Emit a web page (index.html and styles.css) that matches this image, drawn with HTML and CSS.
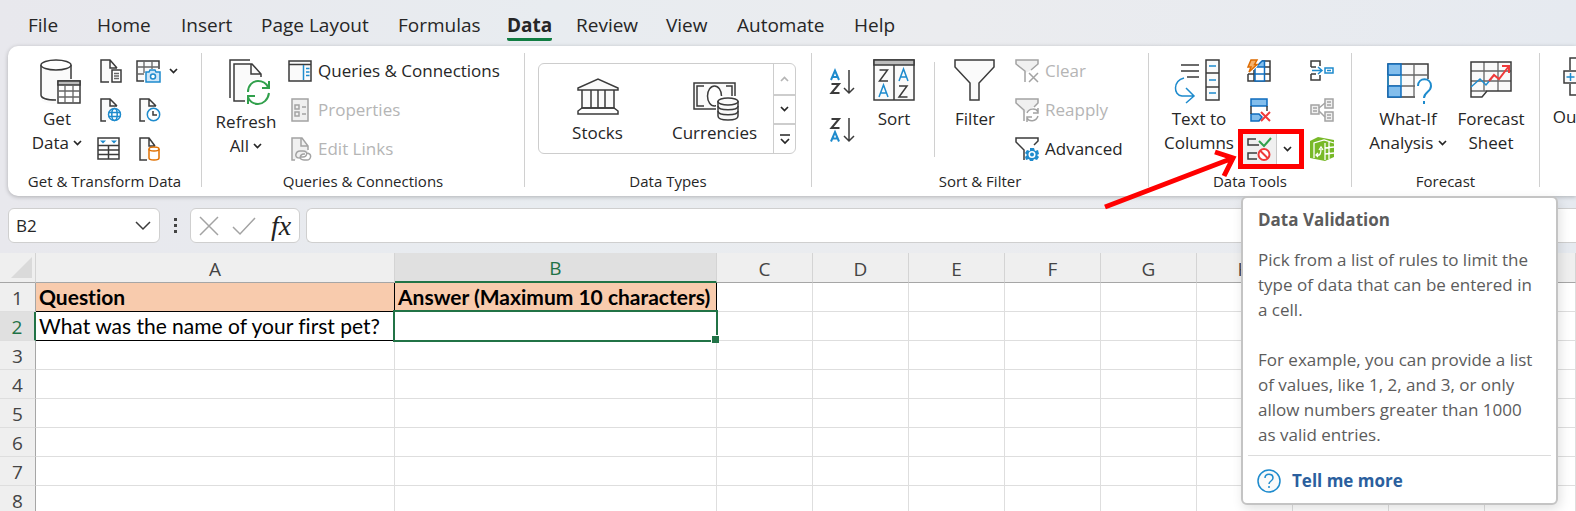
FILE: index.html
```html
<!DOCTYPE html>
<html lang="en">
<head>
<meta charset="utf-8">
<title>Spreadsheet</title>
<link rel="stylesheet" href="styles.css">
</head>
<body>
<nav class="tabs" aria-label="Ribbon tabs">
  <button class="tab">File</button>
  <button class="tab">Home</button>
  <button class="tab">Insert</button>
  <button class="tab">Page Layout</button>
  <button class="tab">Formulas</button>
  <button class="tab tab-active">Data</button>
  <button class="tab">Review</button>
  <button class="tab">View</button>
  <button class="tab">Automate</button>
  <button class="tab">Help</button>
</nav>

<div class="ribbon">
  <section class="group group-get">
    <div class="tools">
      <button class="big">
        <svg class="icon-lg" viewBox="0 0 48 48"><path class="f" d="M8 8v34c0 3 8 5 16 5V25h14V8z"/><path class="k" d="M23 43C14 43 8 41 8 38V8M38 8v14"/><ellipse class="k w" cx="23" cy="8" rx="15" ry="5"/><path class="k w" d="M25 24h22v22H25z"/><path fill="#bbb" stroke="#3b3b3b" stroke-width="1.5" d="M25 24h22v4H25z"/><path class="k thin" d="M25 34h22M25 40h22M32 28v18M40 28v18"/></svg>
        <span>Get<br>Data <svg class="chev" viewBox="0 0 9 6"><path d="M1 1l3.500 3.500L8 1"/></svg></span>
      </button>
      <div class="stack">
        <button class="small" aria-label="From Text/CSV"><svg class="icon" viewBox="0 0 24 24"><path class="f" d="M4 1h9l7 8v1h-6v13H4z"/><path class="k n" d="M12 23H4V1h9l7 8M13 1v8h7"/><path class="k w" d="M15 11h9v12h-9z"/><path class="k thin" d="M17 14.500h5M17 17h5M17 19.500h5"/></svg></button>
        <button class="small" aria-label="From Web"><svg class="icon" viewBox="0 0 24 24"><path class="f" d="M4 1h9l7 7-9 15H4z"/><path class="k n" d="M9 23H4V1h9l7 7M13 1v7h7"/><circle class="b w" cx="17.500" cy="16.500" r="6"/><path class="b" d="M11.500 14.500h12M11.500 18.500h12"/><ellipse class="b n" cx="17.500" cy="16.500" rx="2.700" ry="6"/></svg></button>
        <button class="small" aria-label="From Table/Range"><svg class="icon" viewBox="0 0 24 24"><path class="k w" d="M1 1h21v21H1z"/><path class="k" d="M1 8.500h21M1 13h21M1 17.500h21M11.500 8.500V22"/><path fill="#1e8bcd" d="M3 3.500h6l-3 3zM14 3.500h6l-3 3z"/></svg></button>
      </div>
      <div class="stack">
        <button class="small" aria-label="From Picture"><svg class="icon" viewBox="0 0 24 24"><path class="f" d="M1 2h22v20H1z"/><path class="k n" d="M8 22H1V2h22v8"/><path class="k thin" d="M1 8h22M1 15h7M8 2v12M16 2v8"/><path class="b lb" d="M10 13h3l1-2h5l1 2h4v10H10z"/><circle class="b w" cx="17" cy="17.500" r="2.500"/></svg><svg class="chev" viewBox="0 0 9 6"><path d="M1 1l3.500 3.500L8 1"/></svg></button>
        <button class="small" aria-label="Recent Sources"><svg class="icon" viewBox="0 0 24 24"><path class="f" d="M4 1h9l7 7-9 15H4z"/><path class="k n" d="M9 23H4V1h9l7 7M13 1v7h7"/><circle class="b w" cx="17.500" cy="16.500" r="6.200"/><path class="k" d="M17 13v4h4"/></svg></button>
        <button class="small" aria-label="Existing Connections"><svg class="icon" viewBox="0 0 24 24"><path class="f" d="M4 1h9l6 8-6 14H4z"/><path class="k n" d="M11 23H4V1h9l6 8M13 1v8h6"/><path class="o w" d="M13 12v9c0 1.500 2 2 5 2s5-.5 5-2v-9"/><ellipse class="o w" cx="18" cy="12" rx="5" ry="2"/></svg></button>
      </div>
    </div>
    <h2 class="label">Get &amp; Transform Data</h2>
  </section>

  <section class="group group-queries">
    <div class="tools">
      <button class="big big-loose">
        <svg class="icon-lg" viewBox="0 0 48 48"><path class="k" d="M8 41V3h20"/><path class="f" d="M12 7h18l9 10v27H12z"/><path class="k n" d="M23 44H12V7h18l9 10v3M29 7v10h10"/><circle cx="36" cy="35" r="13" fill="#fff"/><path class="g n" d="M26 35c0-7 5-11 10-11 5 0 8 2 10 6M47 36c-1 7-6 11-11 11s-9-3-10-7"/><path class="g" d="M47 24v7h-7M26 47v-8h7"/></svg>
        <span>Refresh<br>All <svg class="chev" viewBox="0 0 9 6"><path d="M1 1l3.500 3.500L8 1"/></svg></span>
      </button>
      <div class="stack">
        <button class="small"><svg class="icon" viewBox="0 0 24 24"><path class="k f" d="M1 2h22v20H1z"/><path class="k" d="M1 5.500h22"/><path class="b" d="M15.500 6v15M18 9.500h3.500M18 13h3.500M18 16.500h3.500"/></svg><span>Queries &amp; Connections</span></button>
        <button class="small" disabled><svg class="icon" viewBox="0 0 24 24"><path class="d df" d="M4 1h16v22H4z"/><path class="d" d="M7 7h4v4H7zM7 14h4v4H7zM14 9h4M14 16h4"/></svg><span>Properties</span></button>
        <button class="small" disabled><svg class="icon" viewBox="0 0 24 24"><path class="df" d="M4 1h10l6 8v6L7 23H4z"/><path class="d n" d="M7 23H4V1h10l6 8v4M13 1v8h7"/><path class="d n" d="M12 21c-7 0-4-7 0-7h3c6 0 4 6 0 6h-2M18 16c7 0 5 7 1 7h-3c-6 0-4-6 0-6h1"/></svg><span>Edit Links</span></button>
      </div>
    </div>
    <h2 class="label">Queries &amp; Connections</h2>
  </section>

  <section class="group group-types">
    <div class="gallery">
      <button class="item"><svg class="icon-lg" viewBox="0 0 48 48"><path class="k f" d="M4 17v-2L24 6l20 9v2zM8 17h32v18H8z"/><path class="k n" d="M17 17v18M24 17v18M31 17v18M8 35h32l4 3v3H4v-3z"/></svg><span>Stocks</span></button>
      <button class="item"><svg class="icon-lg" viewBox="0 0 48 48"><path class="k f" d="M3 10h41v26H3z"/><path class="k n" d="M13 13H6v20h7M35 13h6v10"/><ellipse class="k w" cx="23.500" cy="23" rx="7" ry="10"/><path fill="#fff" d="M25 23h22v25H25z"/><path class="k f" d="M27 28v15c0 2.500 4 4 10 4s10-1.500 10-4V28"/><path class="k n" d="M27 33c0 5 20 5 20 0M27 38c0 5 20 5 20 0"/><ellipse class="k f" cx="37" cy="28.500" rx="10" ry="3.500"/></svg><span>Currencies</span></button>
      <div class="scroller">
        <button aria-label="Scroll up" disabled><svg class="chev" viewBox="0 0 9 6"><path d="M1 5l3.500-3.500L8 5"/></svg></button>
        <button aria-label="Scroll down"><svg class="chev" viewBox="0 0 9 6"><path d="M1 1l3.500 3.500L8 1"/></svg></button>
        <button aria-label="More"><svg class="more" viewBox="0 0 12 10"><path d="M1 1h10M2 5l4 4 4-4"/></svg></button>
      </div>
    </div>
    <h2 class="label">Data Types</h2>
  </section>

  <section class="group group-sort">
    <div class="tools">
      <div class="orders">
        <button aria-label="Sort A to Z"><svg viewBox="0 0 24 28"><path class="b az n" d="M1 12L5 2.500 9 12M2.500 9h5"/><path class="k az n" d="M1.500 16H9l-7.500 9H9.500"/><path class="k n" d="M19 2v23M14 20l5 5 5-5"/></svg></button>
        <button aria-label="Sort Z to A"><svg viewBox="0 0 24 28"><path class="k az n" d="M1.500 3H9l-7.500 9H9.500"/><path class="b az n" d="M1 25.500L5 16 9 25.500M2.500 22.500h5"/><path class="k n" d="M19 2v23M14 20l5 5 5-5"/></svg></button>
      </div>
      <button class="big"><svg class="icon-lg" viewBox="0 0 48 48"><path class="k f" d="M4 3h40v40H4z"/><path fill="#bbb" stroke="#3b3b3b" stroke-width="1.500" d="M4 3h40v5H4z"/><path class="k n" d="M24 8v35M9.500 13h8l-8 11h8.500M29 29h8l-8 11h8.500"/><path class="b n" d="M9 40l4.500-12L18 40M10.500 36h6M29 24l4.500-12L38 24M30.500 20h6"/></svg><span>Sort</span></button>
      <span class="rule"></span>
      <button class="big"><svg class="icon-lg" viewBox="0 0 48 48"><path class="k f" d="M4 3h39v7L28 26v17h-9V26L4 10z"/></svg><span>Filter</span></button>
      <div class="stack">
        <button class="small" disabled><svg class="icon" viewBox="0 0 24 24"><path class="df" d="M1 1h22v4l-8 7-5 2-9-9z"/><path class="d n" d="M10 23V12L1 5V1h22v4l-7 6M14 14l9 9M23 14l-9 9"/></svg><span>Clear</span></button>
        <button class="small" disabled><svg class="icon" viewBox="0 0 24 24"><path class="df" d="M1 1h22v4l-8 7-6 3-8-10z"/><path class="d n" d="M9 23V12L1 5V1h22v4l-4 4M12 15c2-5 9-5 11-1M23 10v5h-5M23 18c-2 6-9 6-11 2M12 24v-5h5"/></svg><span>Reapply</span></button>
        <button class="small"><svg class="icon" viewBox="0 0 24 24"><path class="k n" d="M9 23V13L1 5V1h22v3l-4 4"/><path fill="#1e8bcd" d="M15 11h4l1 3 3-1 1 4-2 1 2 2-2 3-3-1-1 2h-3l-1-2-3 1-1-3 2-2-2-2 2-3 3 1z"/><circle cx="17" cy="17.500" r="3.500" fill="#fff"/><circle cx="17" cy="17.500" r="2" fill="#1e8bcd"/></svg><span>Advanced</span></button>
      </div>
    </div>
    <h2 class="label">Sort &amp; Filter</h2>
  </section>

  <section class="group group-data">
    <div class="tools">
      <button class="big"><svg class="icon-lg" viewBox="0 0 48 48"><path class="k f" d="M31 3h13v40H31zM31 16h13M31 30h13"/><path class="k" d="M6 8h18M6 14h18M12 20h12"/><path class="b n" d="M9 21C-2 24-2 38 7 39h12M11 31l8 8-8 7"/><path class="b" d="M34 9h7M34 23h7M34 36h7"/></svg><span>Text to<br>Columns</span></button>
      <div class="stack">
        <button class="small" aria-label="Flash Fill"><svg class="icon" viewBox="0 0 24 24"><path class="k w" d="M15 2h8v20H1v-7"/><path class="k" d="M1 15h22M7 11v11M15 8h8"/><path fill="#83beec" d="M8 9l7-7h2.500v6H8z"/><path fill="#fff" d="M8 8h9v14H8z"/><path class="blue n" d="M8 9l7-7h2.500v20H8zM8 15h9M9 8h8"/><path fill="#fff" d="M0 0h13l-3 8-8 6H0z"/><path fill="#f6b26b" stroke="#dd6b00" stroke-width="1.500" d="M4 1h6L7.500 5.500H10L2 13l2-5H1z"/></svg></button>
        <button class="small" aria-label="Remove Duplicates"><svg class="icon" viewBox="0 0 24 24"><path fill="#83beec" stroke="#0f6cbd" stroke-width="1.500" d="M4 1h16v7H4zM4 16h8l3 3-3 4H4z"/><path class="k n" d="M4 8v8M20 8v5"/><path class="r" d="M14 14l9 9M23 14l-9 9"/></svg></button>
        <div class="split">
          <button class="split-main" aria-label="Data Validation" aria-describedby="tip"><svg class="icon" viewBox="0 0 24 24"><path class="k n" d="M9 2H1v6h11M10 16H1v6h9"/><path class="g n" d="M12 4l5 5L24 1"/><circle class="r w" cx="17" cy="17.500" r="5.500"/><path class="r" d="M13 13.500l8 8"/></svg></button>
          <button class="split-arrow" aria-label="Data Validation options"><svg class="chev" viewBox="0 0 9 6"><path d="M1 1l3.500 3.500L8 1"/></svg></button>
          <span class="frame"></span>
          <svg class="arrow" viewBox="0 0 136 64"><path d="M3 58L131 9M113 3l18 6-9 18"/></svg>
          <div class="tooltip" id="tip" role="tooltip">
            <h3>Data Validation</h3>
            <p>Pick from a list of rules to limit the type of data that can be entered in a cell.</p>
            <p>For example, you can provide a list of values, like 1, 2, and 3, or only allow numbers greater than 1000 as valid entries.</p>
            <a class="tell" href="#help"><svg class="icon" viewBox="0 0 24 24"><circle class="b f" cx="12" cy="12" r="11"/><path class="b n" d="M8 9c0-5 8-5 8 0 0 3-4 3-4 6M12 17v2"/></svg><span>Tell me more</span></a>
          </div>
        </div>
      </div>
      <div class="stack">
        <button class="small" aria-label="Consolidate"><svg class="icon" viewBox="0 0 24 24"><path class="k n" d="M1 8V2h9v5M1 8h5M1 15v6h9v-5M1 15h5"/><path class="b n" d="M2 11.500h10M8 8l4 3.500L8 15M15 9h8v5h-8zM17 11.500h4"/></svg></button>
        <button class="small" aria-label="Relationships" disabled><svg class="icon" viewBox="0 0 24 24"><path class="d df" d="M1 7h8v9H1zM15 1h8v9h-8zM15 14h8v9h-8z"/><path class="d n" d="M3 10h4M3 13h4M17 4h4M17 7h4M17 17h4M17 20h4M9 10l6-5M9 13l6 6"/></svg></button>
        <button class="small" aria-label="Manage Data Model"><svg class="icon" viewBox="0 0 24 24"><path fill="#78b928" d="M0 4l8-4 16 3v17l-9 4-15-3z"/><path fill="none" stroke="#fff" stroke-width="1.300" d="M4 21V6l10-3 10 3M15 6v17M15 11l9-1M15 17l9-1M19 5v17M6 18c4 1 5-1 5-6M9 13l2-3 2 3M8 16l-2 2 2 2"/></svg></button>
      </div>
    </div>
    <h2 class="label">Data Tools</h2>
  </section>

  <section class="group group-forecast">
    <div class="tools">
      <button class="big"><svg class="icon-lg" viewBox="0 0 48 48"><path class="k f" d="M4 7h40v33H4z"/><path class="k thin" d="M4 18h40M4 29h40M30 7v33"/><path fill="#83beec" stroke="#0f6cbd" stroke-width="1.500" d="M4 7h13v11H4zM4 29h13v11H4z"/><path class="b" d="M4 18v11M17 18v11"/><path fill="#fff" d="M31 22h17v26H31z"/><path class="b n q" d="M34 29c0-9 13-9 13 0 0 6-7 6-7 12M40 44v3"/></svg><span>What-If<br>Analysis <svg class="chev" viewBox="0 0 9 6"><path d="M1 1l3.500 3.500L8 1"/></svg></span></button>
      <button class="big"><svg class="icon-lg" viewBox="0 0 48 48"><path class="f" d="M4 5h40v29H20l-5 6H4z"/><path class="k thin" d="M4 14h40M4 24h40M17 5v29M31 5v29M4 34h16"/><path class="k n" d="M4 5h40v29H20l-5 6H4z"/><path class="b n" d="M4 30l9-8 6 6 5-6"/><path class="r n" d="M22 24l5-6 5 4L42 9M35 9h7v7"/></svg><span>Forecast<br>Sheet</span></button>
    </div>
    <h2 class="label">Forecast</h2>
  </section>

  <section class="group group-outline">
    <div class="tools">
      <button class="big big-tight"><svg class="icon-lg" viewBox="0 0 48 48"><path class="k f" d="M6 14h13v12H6z"/><path class="k n" d="M12 13V1h30M12 27v11h30M24 20h18"/><path class="b" d="M12.500 16v8M8.500 20h8"/></svg><span>Outline</span></button>
    </div>
  </section>
</div>

<div class="formula-bar">
  <div class="box name-box"><input aria-label="Name Box" value="B2"><button aria-label="Name list"><svg viewBox="0 0 16 10"><path class="k n" d="M1 1l7 7 7-7"/></svg></button></div>
  <span class="dots"><i></i><i></i><i></i></span>
  <div class="box actions">
    <button aria-label="Cancel" disabled><svg viewBox="0 0 24 20"><path class="d n" d="M3 1l18 18M21 1L3 19"/></svg></button>
    <button aria-label="Enter" disabled><svg viewBox="0 0 24 20"><path class="d n" d="M1 11l7 7L23 2"/></svg></button>
    <button class="fx" aria-label="Insert Function">fx</button>
  </div>
  <input class="box formula" aria-label="Formula Bar">
</div>

<table class="sheet">
  <colgroup><col class="c-head"><col class="c-a"><col class="c-b"><col span="8" class="c-std"><col></colgroup>
  <thead>
    <tr><th class="corner"><svg viewBox="0 0 21 21"><path d="M21 0v21H0z"/></svg></th><th>A</th><th class="on">B</th><th>C</th><th>D</th><th>E</th><th>F</th><th>G</th><th>H</th><th></th><th></th><th></th></tr>
  </thead>
  <tbody>
    <tr><th>1</th><td class="title">Question</td><td class="title">Answer (Maximum 10 characters)</td><td></td><td></td><td></td><td></td><td></td><td></td><td></td><td></td><td></td></tr>
    <tr><th class="on">2</th><td class="boxed">What was the name of your first pet?</td><td class="selected"></td><td></td><td></td><td></td><td></td><td></td><td></td><td></td><td></td><td></td></tr>
    <tr><th>3</th><td></td><td></td><td></td><td></td><td></td><td></td><td></td><td></td><td></td><td></td><td></td></tr>
    <tr><th>4</th><td></td><td></td><td></td><td></td><td></td><td></td><td></td><td></td><td></td><td></td><td></td></tr>
    <tr><th>5</th><td></td><td></td><td></td><td></td><td></td><td></td><td></td><td></td><td></td><td></td><td></td></tr>
    <tr><th>6</th><td></td><td></td><td></td><td></td><td></td><td></td><td></td><td></td><td></td><td></td><td></td></tr>
    <tr><th>7</th><td></td><td></td><td></td><td></td><td></td><td></td><td></td><td></td><td></td><td></td><td></td></tr>
    <tr><th>8</th><td></td><td></td><td></td><td></td><td></td><td></td><td></td><td></td><td></td><td></td><td></td></tr>
  </tbody>
</table>
</body>
</html>
```
FILE: styles.css
```css
* { box-sizing: border-box; }
body {
  margin: 0;
  height: 100vh;
  overflow: hidden;
  font-family: "Open Sans", "Noto Sans", sans-serif;
  font-size: 17px;
  color: #262626;
  background: linear-gradient(90deg, #e8e8ed, #e8ecf0 35%, #ebecef 60%, #e6eaf0);
}
button {
  margin: 0;
  padding: 0;
  border: 0;
  background: none;
  font: inherit;
  color: inherit;
}
button:disabled { color: #b5b5b5; }
h2, h3, p { margin: 0; }
svg { display: block; overflow: visible; }

/* Icon strokes and fills */
.k, .b, .g, .o, .r, .d, .blue { stroke-width: 1.5; fill: none; }
.k { stroke: #3b3b3b; }
.b { stroke: #1e8bcd; }
.blue { stroke: #0f6cbd; }
.g { stroke: #31a04c; stroke-width: 2; }
.o { stroke: #e07000; }
.r { stroke: #ef3a3a; stroke-width: 2; }
.d { stroke: #a3a3a3; }
.thin { stroke: #666; stroke-width: 1.3; }
.az, .q { stroke-width: 2; }
.f { fill: #fafafa; }
.w { fill: #fff; }
.lb { fill: #cfe6f8; }
.df { fill: #f0f0f0; }
.n { fill: none; }
.icon { width: 24px; height: 24px; flex: none; }
.icon-lg { width: 48px; height: 48px; flex: none; }
.chev { display: inline-block; width: 9px; height: 6px; vertical-align: 3px; }
.chev path, .more path { fill: none; stroke: currentColor; stroke-width: 1.7; }
.more { width: 12px; height: 10px; }

/* Tabs */
.tabs {
  display: grid;
  grid-template-columns: 69px 84px 80px 137px 109px 69px 90px 71px 117px 60px;
  padding: 9px 0 5px 28px;
  justify-items: start;
  font-size: 19px;
}
.tab { height: 32px; line-height: 32px; white-space: nowrap; border-bottom: 3px solid transparent; }
.tab-active { font-weight: 700; border-color: #107c41; border-radius: 2px; }

/* Ribbon */
.ribbon {
  display: flex;
  margin-left: 8px;
  padding: 7px 0 9px;
  background: #fff;
  border-radius: 10px 0 0 10px;
  box-shadow: 0 1px 4px rgba(0, 0, 0, .25);
}
.group {
  display: flex;
  flex-direction: column;
  justify-content: space-between;
  flex: none;
  height: 134px;
  border-right: 1px solid #d0d0d0;
}
.group-get { width: 194px; }
.group-queries { width: 323px; }
.group-types { width: 287px; }
.group-sort { width: 337px; }
.group-data { width: 203px; }
.group-forecast { width: 188px; }
.group-outline { flex: 1 1 0; min-width: 0; border-right: 0; }
.label {
  align-self: center;
  font-size: 15px;
  font-weight: 400;
  line-height: 12px;
  white-space: nowrap;
}
.tools { display: flex; height: 113px; }
.group-get .tools { gap: 15px; padding-left: 18px; }
.group-get .big { margin-right: -6px; width: 62px; }
.group-queries .tools { gap: 12px; padding-left: 14px; }
.group-queries .big { width: 60px; }
.group-sort .tools { gap: 16px; padding-left: 18px; }
.group-sort .big { width: 48px; }
.group-data .tools { gap: 39px; padding-left: 14px; }
.group-data .big { width: 72px; margin-right: -27px; }
.group-forecast .tools { gap: 9px; padding-left: 16px; }
.group-forecast .big { min-width: 68px; }
.group-forecast .big:first-child { width: 80px; }
.group-outline .tools { padding-left: 12px; }
.group-outline .big { flex: none; width: 60px; }
.big {
  display: flex;
  flex-direction: column;
  align-items: center;
  gap: 2px;
  padding-top: 4px;
  line-height: 24px;
  white-space: nowrap;
}
.big-loose { gap: 5px; }
.big-tight { gap: 0; }
.stack { display: grid; grid-template-rows: repeat(3, 35px); gap: 4px; }
.stack > * { width: 24px; }
.small { display: flex; align-items: center; gap: 6px; white-space: nowrap; }
.small .chev { flex: none; margin-left: 3px; }
.rule { width: 1px; height: 95px; margin-top: 9px; background: #d0d0d0; }
.orders { display: flex; flex-direction: column; gap: 20px; padding-top: 15px; }
.orders svg { width: 24px; height: 28px; }

.gallery {
  display: flex;
  width: 258px;
  height: 91px;
  margin: 10px 0 0 13px;
  border: 1px solid #cdcdcd;
  border-radius: 6px;
}
.item { flex: 1; display: flex; flex-direction: column; align-items: center; padding-top: 9px; line-height: 24px; }
.scroller { display: grid; grid-template-rows: repeat(3, 1fr); width: 22px; border-left: 1px solid #cdcdcd; }
.scroller button { display: grid; place-items: center; }
.scroller button + button { border-top: 2px solid #cdcdcd; }

/* Data Validation split button and its callout */
.split { position: relative; display: flex; align-items: center; }
.split-main { flex: none; height: 30px; margin-left: -4px; padding: 3px 5px 3px 4px; background: #f0f0f0; border-right: 1px solid #c8c8c8; }
.split-arrow { flex: none; width: 20px; line-height: 24px; }
.frame { position: absolute; left: -9px; top: -2px; width: 66px; height: 40px; border: 5px solid #f00; }
.arrow { position: absolute; left: -145px; top: 18px; width: 136px; height: 64px; fill: none; stroke: #f00; stroke-width: 5; pointer-events: none; }
.tooltip {
  position: absolute;
  left: -6px;
  top: 65px;
  z-index: 2;
  width: 317px;
  padding: 9px 5px 10px;
  background: #fff;
  border: 2px solid #c4c4c4;
  border-radius: 6px;
  box-shadow: 2px 4px 12px rgba(0, 0, 0, .12);
  color: #5c5c5c;
  line-height: 25px;
}
.tooltip h3 { padding: 0 10px; font-size: 17px; line-height: 25px; }
.tooltip p { padding: 0 10px; margin-top: 15px; }
.tooltip p + p { margin-top: 25px; }
.tell {
  display: flex;
  align-items: center;
  gap: 11px;
  margin-top: 8px;
  padding: 12px 0 0 9px;
  border-top: 1px solid #dcdcdc;
  color: #2b5f9e;
  font-weight: 700;
  text-decoration: none;
}

/* Formula bar */
.formula-bar { display: flex; height: 35px; margin: 12px 0 10px 8px; }
.box { border: 1px solid #cfcfcf; border-radius: 6px; background: #fff; }
.name-box { display: flex; align-items: center; width: 152px; padding: 0 8px 0 7px; }
.name-box input { flex: 1; min-width: 0; padding: 0; border: 0; outline: 0; background: none; font: inherit; color: inherit; }
.name-box svg { width: 16px; height: 10px; }
.dots { display: flex; flex-direction: column; justify-content: center; align-items: center; gap: 3px; width: 30px; }
.dots i { width: 3px; height: 3px; background: #444; }
.actions { display: flex; align-items: center; gap: 11px; width: 110px; padding-left: 6px; }
.actions svg { width: 24px; height: 20px; }
.fx { padding-left: 4px; font: italic 400 28px/30px "Liberation Serif", serif; color: #222; }
.formula { flex: 1; min-width: 0; margin-left: 6px; padding: 0 8px; border-right: 0; border-radius: 6px 0 0 6px; font: inherit; }

/* Sheet */
.sheet { width: 100%; table-layout: fixed; border-collapse: separate; border-spacing: 0; background: #fff; }
.c-head { width: 36px; }
.c-a { width: 359px; }
.c-b { width: 322px; }
.c-std { width: 96px; }
.sheet th, .sheet td { height: 29px; padding: 0 3px; border: 0 solid #dedede; border-width: 0 1px 1px 0; line-height: 26px; white-space: nowrap; }
.sheet th { padding-top: 2px; background: #efefef; font-size: 19px; font-weight: 400; color: #444; border-right-color: #d4d4d4; }
.sheet thead th { border-bottom-color: #a6a6a6; }
.sheet tbody th { border-right-color: #a6a6a6; }
.sheet td { font-family: Lato, "Open Sans", sans-serif; font-size: 21px; font-variant-ligatures: none; color: #000; }
.sheet .on { background: #e0e0e0; color: #1f7246; }
.sheet thead .on { border-bottom: 2px solid #217346; }
.sheet tbody .on { border-right: 2px solid #217346; }
.sheet .corner { padding: 0 3px 0 11px; }
.corner svg { width: 21px; height: 21px; fill: #dadada; }
.sheet .title { background: #f8cbad; border-color: #000; font-weight: 700; }
.sheet .boxed { border-color: #000; }
.selected { position: relative; }
.selected::before {
  content: "";
  position: absolute;
  inset: -2px;
  border: 2px solid #217346;
}
.selected::after {
  content: "";
  position: absolute;
  right: -3px;
  bottom: -3px;
  width: 7px;
  height: 7px;
  background: #217346;
  border: 1px solid #fff;
  border-width: 1px 0 0 1px;
}
```
